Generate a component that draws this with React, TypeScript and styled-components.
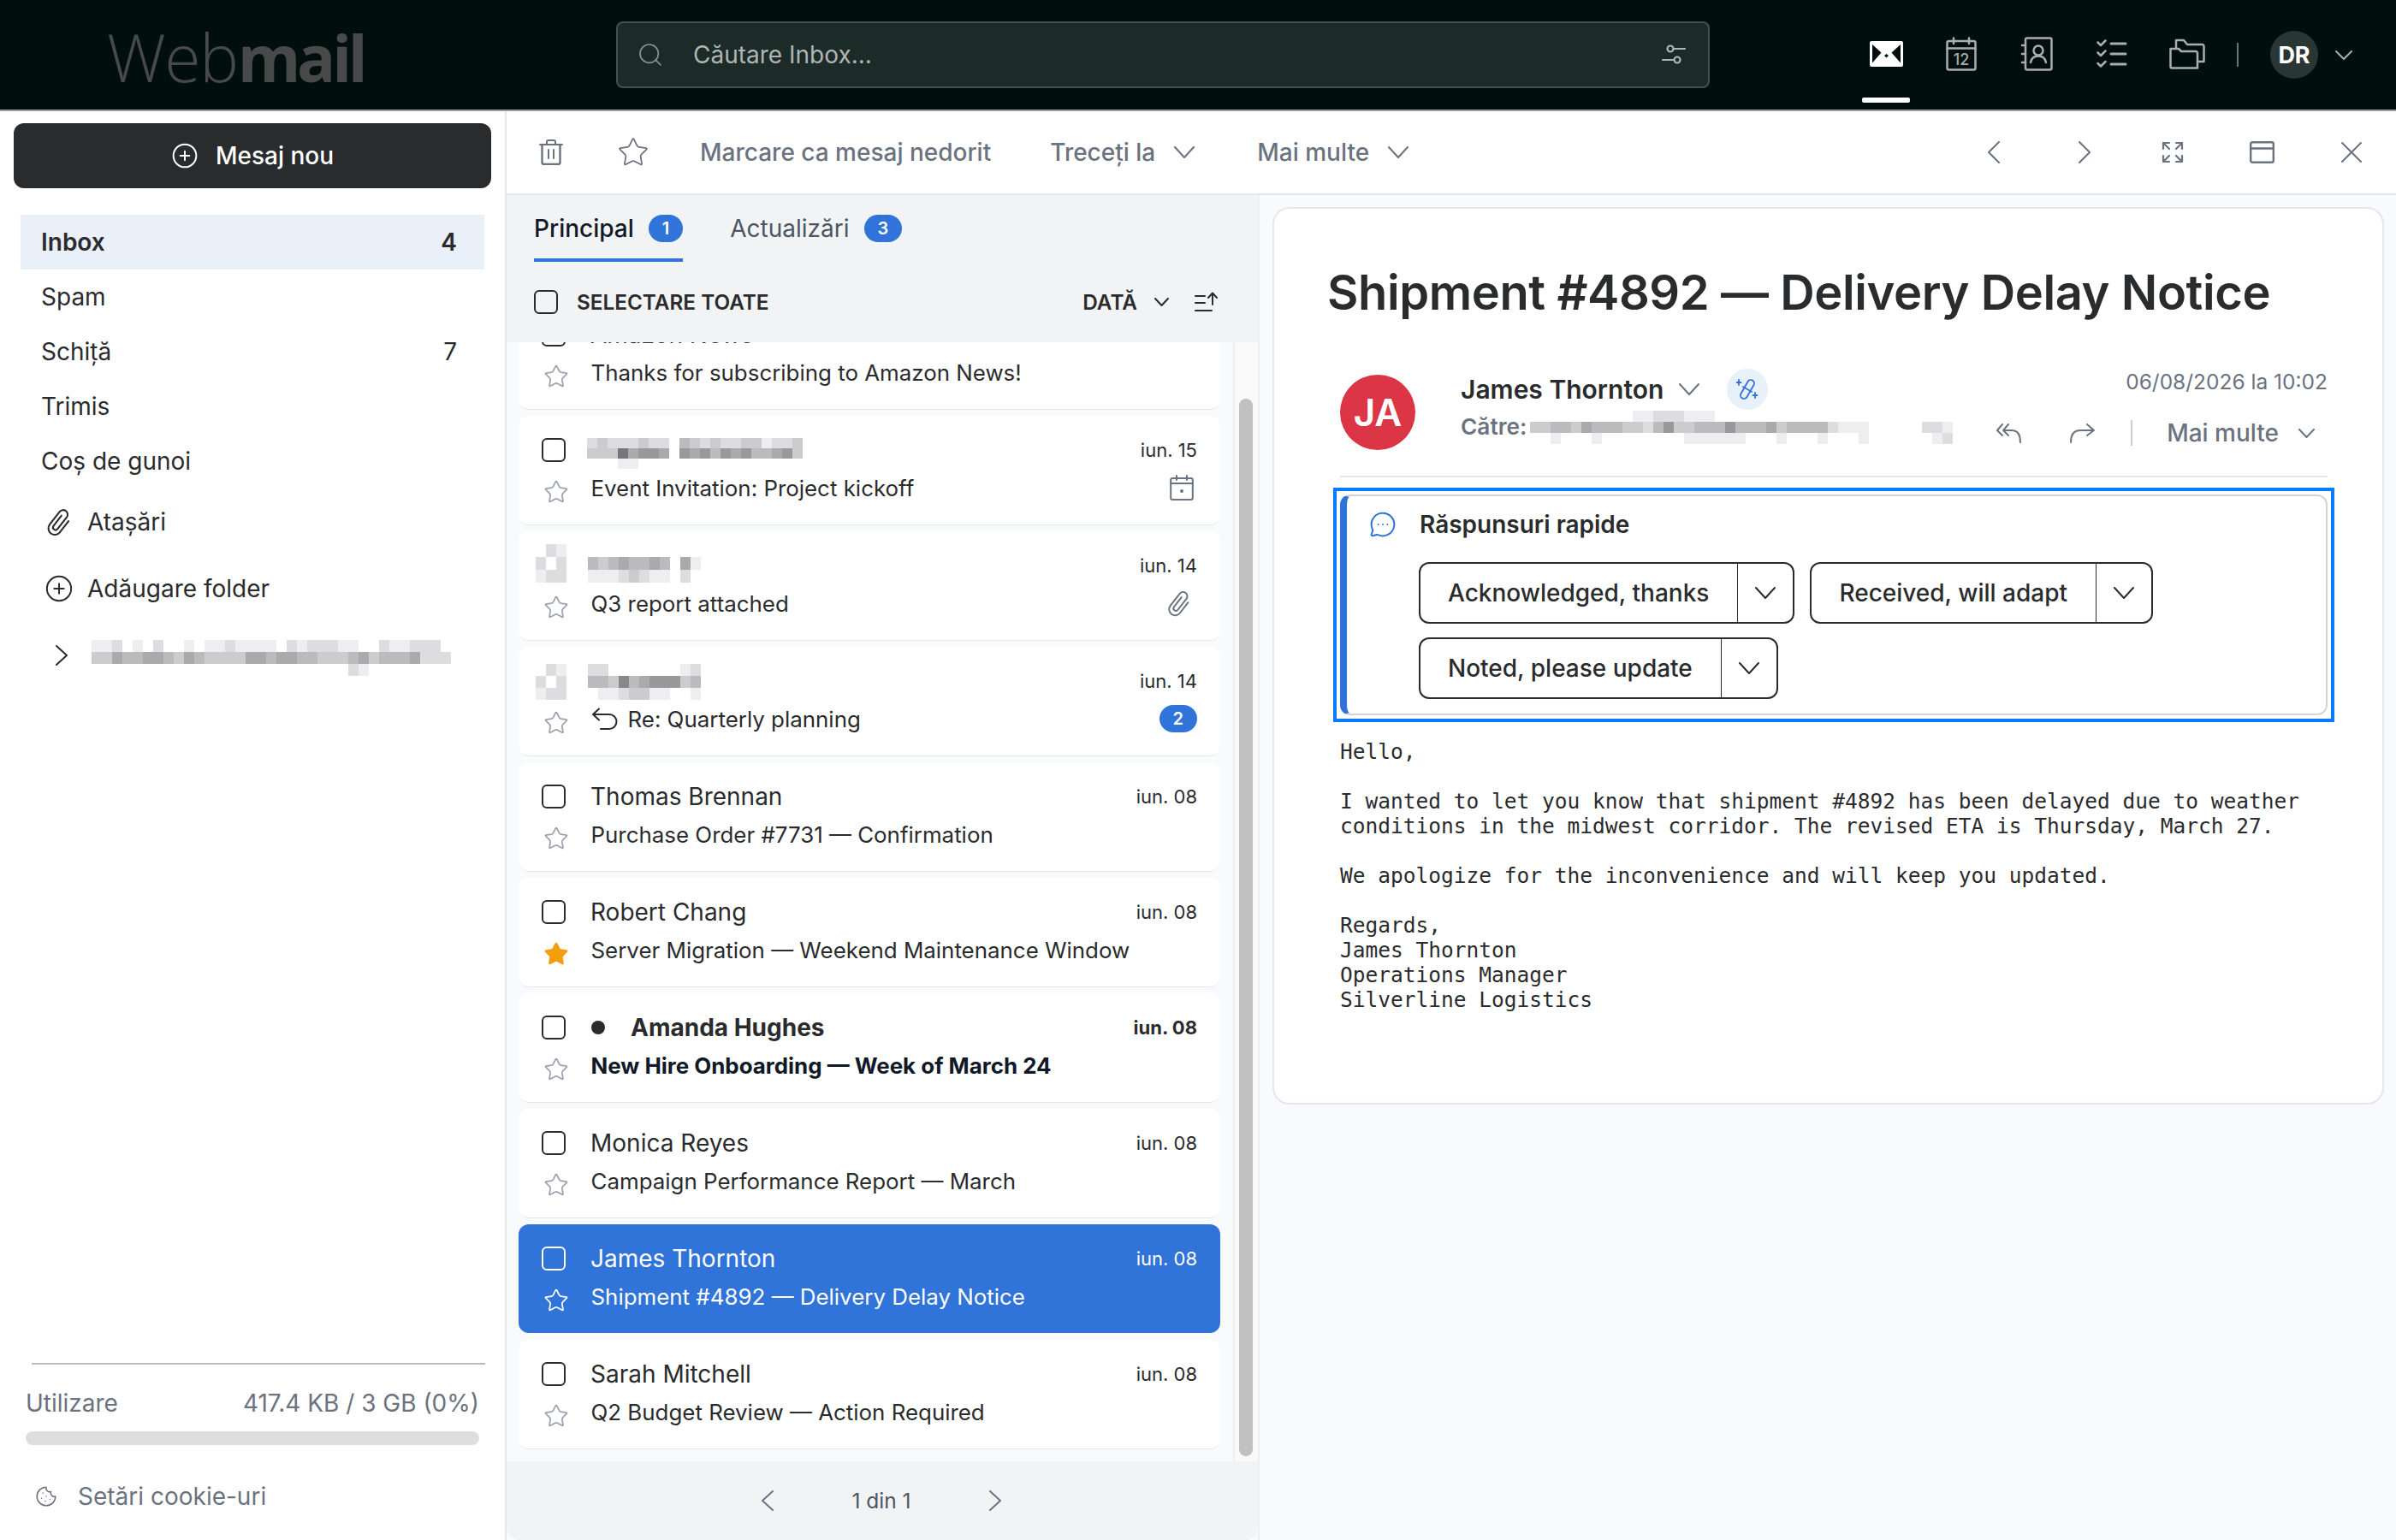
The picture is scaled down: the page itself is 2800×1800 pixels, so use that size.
import React from "react";
import styled, { createGlobalStyle } from "styled-components";
import { Star, CirclePlus, Cookie, MessageCircleMore, Search } from "lucide-react";

const Global = createGlobalStyle`
  html, body { margin: 0; padding: 0; height: 100%; overflow: hidden; }
  body { font-family: Inter, "Noto Sans", sans-serif; color: #2a2b2d; background: #fff; }
  * { box-sizing: border-box; }
  svg { display: block; flex-shrink: 0; }
`;

const BLUE = "#3073d9";
const GREY = "#6b7280";

const Page = styled.div`
  width: 2800px;
  height: 1800px;
  display: flex;
  flex-direction: column;
`;

/* ---------- top bar ---------- */
const TopBar = styled.header`
  height: 130px;
  background: #000f0d;
  border-bottom: 2px solid #999c9b;
  display: flex;
  align-items: center;
  flex-shrink: 0;
`;
const Logo = styled.div`
  width: 720px;
  padding-left: 125px;
  margin-top: 4px;
  font-family: "Open Sans", sans-serif;
  font-size: 77px;
  letter-spacing: -1.4px;
  line-height: 1;
  font-weight: 300;
  color: #474a49;
  b { font-weight: 700; font-size: 75px; letter-spacing: -4.2px; }
`;
const SearchBox = styled.div`
  width: 1278px;
  height: 78px;
  background: #1c2a28;
  border: 2px solid #42504e;
  border-radius: 8px;
  display: flex;
  align-items: center;
  padding: 0 26px 0 22px;
  font-size: 28px;
  color: #b0b5b4;
  gap: 34px;
  span { flex: 1; }
`;
const NavIcons = styled.nav`
  margin-left: 162px;
  display: flex;
  align-items: center;
  height: 128px;
  flex: 1;
`;
const NavItem = styled.div<{ $active?: boolean }>`
  position: relative;
  width: 88px;
  height: 100%;
  display: flex;
  align-items: center;
  justify-content: center;
  padding-bottom: 2px;
  &::after {
    content: "";
    display: ${(p) => (p.$active ? "block" : "none")};
    position: absolute;
    left: 16px;
    right: 16px;
    bottom: 8px;
    height: 6px;
    border-radius: 2px;
    background: #fff;
  }
`;
const NavDivider = styled.div`
  width: 2px;
  height: 28px;
  background: #6f7574;
  margin: 0 37px 0 14px;
`;
const UserAvatar = styled.div`
  width: 56px;
  height: 56px;
  border-radius: 50%;
  background: #2a3634;
  color: #fff;
  font-weight: 700;
  font-size: 27px;
  display: flex;
  align-items: center;
  justify-content: center;
  margin-right: 20px;
`;

/* ---------- layout ---------- */
const Body = styled.div`
  flex: 1;
  display: flex;
  min-height: 0;
`;

/* ---------- sidebar ---------- */
const Sidebar = styled.aside`
  width: 592px;
  flex-shrink: 0;
  border-right: 2px solid #e5e7eb;
  display: flex;
  flex-direction: column;
  font-size: 28px;
`;
const Compose = styled.div`
  margin: 14px 16px 31px;
  height: 76px;
  border-radius: 12px;
  background: #2a2b2d;
  color: #fff;
  font-weight: 500;
  display: flex;
  align-items: center;
  justify-content: center;
  gap: 20px;
`;
const Folder = styled.div<{ $active?: boolean }>`
  margin: 0 24px;
  height: 64px;
  padding: 0 32px 0 24px;
  display: flex;
  align-items: center;
  justify-content: space-between;
  background: ${(p) => (p.$active ? "#e9f0fa" : "transparent")};
  font-weight: ${(p) => (p.$active ? 600 : 400)};
`;
const AuxRow = styled.div`
  height: 78px;
  padding-left: 54px;
  display: flex;
  align-items: center;
  gap: 18px;
`;
const AuxIcon = styled.div<{ $shift?: number }>`
  width: 30px;
  display: flex;
  justify-content: center;
  padding-left: ${(p) => p.$shift || 0}px;
`;
const Usage = styled.div`
  margin-top: auto;
  padding: 0 30px 0 30px;
  color: ${GREY};
  font-size: 28px;
`;
const UsageRule = styled.div`
  height: 2px;
  margin: 0 -7px 0 7px;
  background: #b9bdbc;
`;
const UsageText = styled.div`
  display: flex;
  justify-content: space-between;
  height: 78px;
  align-items: center;
  padding-top: 11px;
`;
const UsageBar = styled.div`
  height: 16px;
  border-radius: 8px;
  background: #dedede;
`;
const CookieRow = styled.div`
  height: 111px;
  padding: 8px 0 0 41px;
  display: flex;
  align-items: center;
  gap: 24px;
  color: ${GREY};
  font-size: 28px;
`;

/* ---------- toolbar ---------- */
const Main = styled.main`
  flex: 1;
  display: flex;
  flex-direction: column;
  min-width: 0;
`;
const Toolbar = styled.div`
  height: 98px;
  flex-shrink: 0;
  border-bottom: 2px solid #e5e7eb;
  display: flex;
  align-items: center;
  padding: 0 40px 0 38px;
  color: ${GREY};
  font-size: 28px;
  font-weight: 500;
`;
const ToolItem = styled.div<{ $gap: number }>`
  display: flex;
  align-items: center;
  gap: 22px;
  margin-left: ${(p) => p.$gap}px;
`;
const ToolRight = styled.div`
  margin-left: auto;
  display: flex;
  align-items: center;
`;

const Columns = styled.div`
  flex: 1;
  display: flex;
  min-height: 0;
`;

/* ---------- message list ---------- */
const ListColumn = styled.section`
  width: 880px;
  flex-shrink: 0;
  display: flex;
  flex-direction: column;
  border-right: 2px solid #eceef1;
  background: #f9fafc;
`;
const Tabs = styled.div`
  height: 78px;
  background: #f2f3f5;
  display: flex;
  padding-left: 32px;
  gap: 55px;
  flex-shrink: 0;
`;
const Tab = styled.div<{ $active?: boolean }>`
  height: 78px;
  display: flex;
  align-items: center;
  gap: 17px;
  padding-top: 4px;
  font-size: 28px;
  color: ${(p) => (p.$active ? "#111827" : "#4b5563")};
  font-weight: ${(p) => (p.$active ? 500 : 400)};
  border-bottom: 4px solid ${(p) => (p.$active ? BLUE : "transparent")};
`;
const CountBadge = styled.span`
  min-width: 40px;
  padding: 0 16px;
  height: 32px;
  border-radius: 16px;
  background: ${BLUE};
  color: #fff;
  font-size: 20px;
  font-weight: 600;
  display: inline-flex;
  align-items: center;
  justify-content: center;
`;
const SelectBar = styled.div`
  height: 94px;
  background: #f2f3f5;
  display: flex;
  align-items: center;
  padding: 0 46px 0 32px;
  flex-shrink: 0;
  font-size: 24.3px;
  font-weight: 600;
  position: relative;
  z-index: 1;
`;
const SelectLabel = styled.span`
  margin-left: 22px;
  flex: 1;
`;
const ListBody = styled.div`
  flex: 1;
  min-height: 0;
  display: flex;
  overflow: hidden;
`;
const Rows = styled.div`
  flex: 1;
  padding: 0 15px 0 14px;
  margin-top: -49px;
  display: flex;
  flex-direction: column;
  gap: 8px;
`;
const RowCard = styled.article<{ $selected?: boolean }>`
  height: 127px;
  flex-shrink: 0;
  border-radius: 12px;
  background: ${(p) => (p.$selected ? BLUE : "#fff")};
  color: ${(p) => (p.$selected ? "#fff" : "#2a2b2d")};
  box-shadow: ${(p) => (p.$selected ? "none" : "0 2px 0 -1px #e3e6ec")};
  padding: 26px 27px 0 27px;
  font-size: 25.9px;
`;
const RowTop = styled.div`
  height: 28px;
  display: flex;
  align-items: center;
`;
const RowBottom = styled.div`
  margin-top: 13px;
  height: 34px;
  display: flex;
  align-items: center;
`;
const CheckBox = styled.span<{ $light?: boolean }>`
  width: 28px;
  height: 28px;
  flex-shrink: 0;
  border-radius: 6px;
  border: 2px solid ${(p) => (p.$light ? "#fff" : "#2a2b2d")};
`;
const Sender = styled.span<{ $bold?: boolean }>`
  margin-left: 29px;
  flex: 1;
  font-size: 28px;
  font-weight: ${(p) => (p.$bold ? 700 : 400)};
`;
const RowDate = styled.span<{ $bold?: boolean }>`
  font-size: 22px;
  font-weight: ${(p) => (p.$bold ? 700 : 400)};
`;
const UnreadDot = styled.span`
  width: 16px;
  height: 16px;
  border-radius: 50%;
  background: #2a2b2d;
  margin: 0 1px 0 30px;
`;
const StarCell = styled.div`
  width: 57.5px;
  padding: 10px 0 0 2px;
  flex-shrink: 0;
`;
const Subject = styled.span<{ $bold?: boolean }>`
  flex: 1;
  display: flex;
  align-items: center;
  gap: 12px;
  font-weight: ${(p) => (p.$bold ? 700 : 400)};
  color: ${(p) => (p.$bold ? "#111827" : "inherit")};
`;
const RowIcon = styled.span`
  margin-right: 4px;
`;
const Track = styled.div`
  width: 29px;
  flex-shrink: 0;
  border-left: 2px solid #eceef1;
  background: #fafafa;
  padding: 66px 6px 6px 5px;
`;
const Thumb = styled.div`
  height: 100%;
  border-radius: 8px;
  background: #c1c1c1;
`;
const Pager = styled.div`
  height: 92px;
  flex-shrink: 0;
  background: #f2f3f5;
  border-radius: 0 0 16px 16px;
  display: flex;
  align-items: center;
  justify-content: center;
  gap: 91px;
  padding-right: 2px;
  font-size: 24.5px;
  color: #4b5563;
`;

/* ---------- reading pane ---------- */
const ReadingPane = styled.section`
  flex: 1;
  min-width: 0;
  background: #f9fafc;
  padding: 14px 14px 0 15px;
`;
const ReadingCard = styled.div`
  height: 1049px;
  background: #fff;
  border: 2px solid #e5e7eb;
  border-radius: 20px;
  padding: 0 64px 0 77px;
`;
const Title = styled.h1`
  margin: 60px 0 0 -15px;
  font-size: 56px;
  line-height: 76px;
  font-weight: 600;
  letter-spacing: -0.4px;
  color: #2a2b2d;
`;
const Meta = styled.div`
  display: flex;
  margin-top: 51px;
  padding-bottom: 30px;
  border-bottom: 2px solid #e5e7eb;
`;
const AvatarCircle = styled.div`
  width: 88px;
  height: 88px;
  border-radius: 50%;
  background: #dc3545;
  color: #fff;
  font-size: 44px;
  font-weight: 600;
  display: flex;
  align-items: center;
  justify-content: center;
  margin: 7px 53px 0 0;
  flex-shrink: 0;
`;
const MetaCol = styled.div`
  flex: 1;
  min-width: 0;
`;
const MetaLine = styled.div`
  display: flex;
  align-items: center;
  height: 48px;
`;
const SenderName = styled.span`
  font-size: 30px;
  font-weight: 600;
  margin-right: 18px;
`;
const WandPill = styled.span`
  width: 48px;
  height: 48px;
  border-radius: 50%;
  background: #e8f0fb;
  display: flex;
  align-items: center;
  justify-content: center;
  margin-left: 32px;
`;
const MetaDate = styled.span`
  margin-left: auto;
  align-self: flex-start;
  font-size: 24.5px;
  color: ${GREY};
`;
const ToLine = styled.div`
  display: flex;
  align-items: flex-start;
  height: 46px;
  color: ${GREY};
  font-size: 26.25px;
  font-weight: 600;
`;
const ToLabel = styled.span`
  margin: 4px 4px 0 0;
`;
const ToActions = styled.div`
  margin-left: auto;
  display: flex;
  align-items: center;
  height: 40px;
  margin-top: 7px;
  padding-right: 15px;
  font-size: 28px;
  font-weight: 500;
`;
const ActionRule = styled.span`
  width: 2px;
  height: 30px;
  background: #c9ccd1;
  margin: 0 40px 0 42px;
`;
const FocusRing = styled.div`
  margin: 12px -8px 0 -8px;
  border: 4px solid #0a7bff;
  padding: 4px;
`;
const QuickCard = styled.div`
  border: 2px solid #d1d5db;
  border-left: 8px solid ${BLUE};
  border-radius: 12px;
  height: 258px;
  padding: 17px 30px 0 26px;
`;
const QuickTitle = styled.div`
  display: flex;
  align-items: center;
  gap: 27px;
  height: 32px;
  font-size: 28px;
  font-weight: 600;
`;
const QuickButtons = styled.div`
  display: flex;
  flex-wrap: wrap;
  gap: 16px 18px;
  margin: 28px 0 0 58px;
`;
const SplitButton = styled.div`
  height: 72px;
  border: 2px solid #2a2b2d;
  border-radius: 12px;
  display: flex;
  align-items: center;
  font-size: 28px;
`;
const SplitLabel = styled.span`
  padding: 0 33px 0 32px;
  height: 100%;
  display: flex;
  align-items: center;
  font-weight: 500;
  border-right: 1px solid #2a2b2d;
`;
const SplitArrow = styled.span`
  width: 64px;
  display: flex;
  justify-content: center;
`;
const MessageBody = styled.pre`
  margin: 20px 0 0 0;
  font-family: "DejaVu Sans Mono", monospace;
  font-size: 24.5px;
  line-height: 29px;
  color: #2a2b2d;
`;

/* ---------- drawings ---------- */
const S = { fill: "none", stroke: "currentColor", strokeLinecap: "round", strokeLinejoin: "round" } as const;

// thin wide chevrons, dir picks the way it points
function Chevron({ dir = "down", w = 24, h = 14, color = GREY, sw = 2 }: { dir?: "down" | "left" | "right"; w?: number; h?: number; color?: string; sw?: number }) {
  const d =
    dir === "down"
      ? `M1 1 L${w / 2} ${h - 1} L${w - 1} 1`
      : dir === "left"
      ? `M${w - 1} 1 L1 ${h / 2} L${w - 1} ${h - 1}`
      : `M1 1 L${w - 1} ${h / 2} L1 ${h - 1}`;
  return (
    <svg width={w} height={h} viewBox={`0 0 ${w} ${h}`} style={{ color }}>
      <path d={d} {...S} strokeWidth={sw} />
    </svg>
  );
}

function MailIcon() {
  return (
    <svg width="39" height="30" viewBox="0 0 39 30">
      <rect width="39" height="30" rx="2" fill="#fff" />
      <path d="M3 4 L3 25.5 L13.5 13.5 Z M36 4 L36 25.5 L25.5 13.5 Z" fill="#000f0d" />
      <path d="M17 17 L19.5 15 L22 17 L19.5 19.5 Z" fill="#000f0d" />
    </svg>
  );
}
function CalendarNav() {
  return (
    <svg width="36" height="40" viewBox="0 0 36 40" style={{ color: "#a9aeac" }}>
      <rect x="1.5" y="5" width="33" height="33.5" rx="2" {...S} strokeWidth="2.5" />
      <path d="M1.5 13.5 H34.5 M9 1.5 V8 M27 1.5 V8" {...S} strokeWidth="2.5" />
      <text x="18" y="33" textAnchor="middle" fontFamily="Inter, sans-serif" fontSize="18" fontWeight="500" fill="currentColor">12</text>
    </svg>
  );
}
function ContactsNav() {
  return (
    <svg width="38" height="40" viewBox="0 0 38 40" style={{ color: "#a9aeac" }}>
      <rect x="6" y="1.5" width="30.5" height="37" rx="2" {...S} strokeWidth="2.5" />
      <path d="M2 10 H6 M2 20 H6 M2 30 H6" {...S} strokeWidth="2.5" />
      <circle cx="21" cy="16" r="5.5" {...S} strokeWidth="2.5" />
      <path d="M12 30 C13 24.5 17 22.5 21 22.5 C25 22.5 29 24.5 30 30" {...S} strokeWidth="2.5" />
    </svg>
  );
}
function TasksNav() {
  return (
    <svg width="36" height="34" viewBox="0 0 36 34" style={{ color: "#a9aeac" }}>
      <path d="M1.5 3.5 L5 7 L10.5 1.5 M1.5 15.5 L5 19 L10.5 13.5 M1.5 28 L5 31.5 L10.5 26" {...S} strokeWidth="2.5" />
      <path d="M17 5 H34 M17 17 H34 M17 29 H34" {...S} strokeWidth="3" />
    </svg>
  );
}
function FolderNav() {
  return (
    <svg width="42" height="36" viewBox="0 0 42 36" style={{ color: "#a9aeac" }}>
      <path d="M1.5 12 H11 L14 15 H31 C32 15 33 16 33 17 V34.5 H3 C2 34.5 1.5 34 1.5 33 Z" {...S} strokeWidth="2.5" />
      <path d="M8 11 V2 H17 L21 7 H38.5 C39.5 7 40.5 8 40.5 9 V27 H33" {...S} strokeWidth="2.5" />
    </svg>
  );
}
function SlidersIcon() {
  return (
    <svg width="28" height="24" viewBox="0 0 28 24" style={{ color: "#b0b5b4" }}>
      <path d="M14 5 H27 M1 18 H13" {...S} strokeWidth="2.2" />
      <circle cx="10" cy="5" r="3.5" {...S} strokeWidth="2.2" />
      <circle cx="18" cy="18" r="3.5" {...S} strokeWidth="2.2" />
    </svg>
  );
}
function TrashIcon() {
  return (
    <svg width="28" height="30" viewBox="0 0 28 30" style={{ color: GREY }}>
      <path d="M1 6 H27 M9 5 V2.5 C9 1.5 10 1 11 1 H17 C18 1 19 1.5 19 2.5 V5" {...S} strokeWidth="2" />
      <path d="M3.5 6 V27 C3.5 28.5 4.2 29 5.5 29 H22.5 C23.8 29 24.5 28.5 24.5 27 V6" {...S} strokeWidth="2.4" />
      <path d="M11 12 V22 M17 12 V22" {...S} strokeWidth="2" />
    </svg>
  );
}
function ExpandIcon() {
  return (
    <svg width="26" height="26" viewBox="0 0 26 26" style={{ color: GREY }}>
      <path d="M2 9 V2 H9 M2 2 L9 9 M17 2 H24 V9 M24 2 L17 9 M2 17 V24 H9 M2 24 L9 17 M17 24 H24 V17 M24 24 L17 17" {...S} strokeWidth="2.2" />
    </svg>
  );
}
function PaneIcon() {
  return (
    <svg width="29" height="26" viewBox="0 0 29 26" style={{ color: GREY }}>
      <rect x="1.2" y="1.2" width="26.6" height="23.6" rx="2" {...S} strokeWidth="2.4" />
      <path d="M1.2 8.5 H27.8" {...S} strokeWidth="2.4" />
    </svg>
  );
}
function CloseIcon() {
  return (
    <svg width="24" height="24" viewBox="0 0 24 24" style={{ color: GREY }}>
      <path d="M1 1 L23 23 M23 1 L1 23" {...S} strokeWidth="2" />
    </svg>
  );
}
function SortIcon() {
  return (
    <svg width="28" height="24" viewBox="0 0 28 24" style={{ color: "#2a2b2d" }}>
      <path d="M1 5 H12 M1 13 H12 M1 22 H20 M21 15 V2 M16 7 L21 1.5 L26 7" {...S} strokeWidth="2" />
    </svg>
  );
}
function ClipIcon({ size = 28, color = "#2a2b2d" }: { size?: number; color?: string }) {
  return (
    <svg width={size} height={size} viewBox="0 0 24 24" style={{ color }}>
      <g transform="rotate(38 12 12)">
        <path d="M10.5 7 V17 A2 2 0 0 0 14.5 17 V5.5 A3.5 3.5 0 0 0 7.5 5.5 V18 A5 5 0 0 0 17.5 18 V7" {...S} strokeWidth="1.4" />
      </g>
    </svg>
  );
}
function SmallCalendar() {
  return (
    <svg width="28" height="30" viewBox="0 0 28 30" style={{ color: GREY }}>
      <rect x="1.2" y="4" width="25.6" height="25" rx="2" {...S} strokeWidth="2" />
      <path d="M1.2 10 H26.8 M8 1 V6 M20 1 V6" {...S} strokeWidth="2" />
      <circle cx="14" cy="19" r="2" fill="currentColor" />
    </svg>
  );
}
function WandIcon() {
  return (
    <svg width="26" height="28" viewBox="0 0 26 28" style={{ color: BLUE }}>
      <rect x="9" y="2" width="8" height="24" rx="4" transform="rotate(30 13 14)" {...S} strokeWidth="1.8" />
      <path d="M7 14 L19 14" {...S} strokeWidth="1.6" transform="rotate(30 13 14)" />
      <path d="M3 3 V9 M0.5 6 H5.5 M22 18 V24 M19.5 21 H24.5" {...S} strokeWidth="1.8" />
    </svg>
  );
}
function ReplyAllIcon() {
  return (
    <svg width="30" height="24" viewBox="0 0 30 24" style={{ color: GREY }}>
      <path d="M7 2 L1 9 L7 15 M14 2 L8 9 L14 15 M8 9 H18 C24 9 28 13 28 23" {...S} strokeWidth="2" />
    </svg>
  );
}
function ForwardIcon() {
  return (
    <svg width="30" height="24" viewBox="0 0 30 24" style={{ color: GREY }}>
      <path d="M21 2 L29 9 L21 15 M29 9 H13 C6 9 2 13 2 23" {...S} strokeWidth="2" />
    </svg>
  );
}
function RepliedIcon() {
  return (
    <svg width="31" height="27" viewBox="0 0 31 27" style={{ color: "#2a2b2d" }}>
      <path d="M9 1.5 L2 8 L9 14.5 M2 8 H21 A8.5 8.5 0 0 1 21 25 H11" {...S} strokeWidth="2" />
    </svg>
  );
}

// the redacted bits of the shot: one hex digit per cell, "." leaves it empty
function Mosaic({ lines, cw = 12, ch = 12 }: { lines: string[]; cw?: number; ch?: number }) {
  const cols = Math.max(...lines.map((l) => l.length));
  return (
    <svg width={cols * cw} height={lines.length * ch} shapeRendering="crispEdges">
      {lines.map((line, y) =>
        line.split("").map((c, x) => {
          if (c === ".") return null;
          const v = parseInt(c, 16) * 17;
          return <rect key={x + "-" + y} x={x * cw} y={y * ch} width={cw} height={ch} fill={`rgb(${v},${v},${v + 2})`} />;
        })
      )}
    </svg>
  );
}

const RowMosaicWrap = styled.span<{ $top: number }>`
  margin: ${(p) => p.$top}px 0 0 25px;
  flex: 1;
  display: flex;
  align-self: flex-start;
`;
const CheckMosaicWrap = styled.span<{ $top: number }>`
  margin: ${(p) => p.$top}px 0 0 -7px;
  flex-shrink: 0;
  align-self: flex-start;
`;
const FolderMosaicWrap = styled.span`
  margin: 5px 0 0 5px;
`;
const ToMosaicWrap = styled.span`
  display: flex;
  gap: 62px;
  margin-top: 1px;
`;

type Row = {
  from?: string;
  subject: string;
  date: string;
  starred?: boolean;
  unread?: boolean;
  selected?: boolean;
  extra?: "calendar" | "clip" | "badge";
  replied?: boolean;
  fromMosaic?: string[];
  cellH?: number;
  mosaicTop?: number;
  checkMosaic?: boolean;
};

const checkCells = ["fde", "d.d", "edd"];

const rows: Row[] = [
  { from: "Amazon News", subject: "Thanks for subscribing to Amazon News!", date: "" },
  {
    subject: "Event Invitation: Project kickoff",
    date: "iun. 15",
    extra: "calendar",
    mosaicTop: 0,
    fromMosaic: ["dcdddcdd.bcdcddcceddc", "ccc7a99a.9a9b9a9bba9c", "...ee................"],
  },
  {
    subject: "Q3 report attached",
    date: "iun. 14",
    extra: "clip",
    checkMosaic: true,
    cellH: 15,
    mosaicTop: -11,
    fromMosaic: ["f.......f.f", "bcbabbab.ae", "eeedcdee.df"],
  },
  {
    subject: "Re: Quarterly planning",
    date: "iun. 14",
    extra: "badge",
    replied: true,
    checkMosaic: true,
    cellH: 14,
    mosaicTop: -6,
    fromMosaic: ["dd......fed", "bbc8ba999cb", "feedcceeffe"],
  },
  { from: "Thomas Brennan", subject: "Purchase Order #7731 — Confirmation", date: "iun. 08" },
  { from: "Robert Chang", subject: "Server Migration — Weekend Maintenance Window", date: "iun. 08", starred: true },
  { from: "Amanda Hughes", subject: "New Hire Onboarding — Week of March 24", date: "iun. 08", unread: true },
  { from: "Monica Reyes", subject: "Campaign Performance Report — March", date: "iun. 08" },
  { from: "James Thornton", subject: "Shipment #4892 — Delivery Delay Notice", date: "iun. 08", selected: true },
  { from: "Sarah Mitchell", subject: "Q2 Budget Review — Action Required", date: "iun. 08" },
];

function MessageRow({ row }: { row: Row }) {
  const light = row.selected;
  return (
    <RowCard $selected={row.selected}>
      <RowTop>
        {row.checkMosaic ? (
          <CheckMosaicWrap $top={row.mosaicTop || 0}>
            <Mosaic lines={checkCells} cw={12} ch={row.cellH} />
          </CheckMosaicWrap>
        ) : (
          <CheckBox $light={light} />
        )}
        {row.unread && <UnreadDot />}
        {row.fromMosaic ? (
          <RowMosaicWrap $top={row.mosaicTop || 0}>
            <Mosaic lines={row.fromMosaic} ch={row.cellH} />
          </RowMosaicWrap>
        ) : (
          <Sender $bold={row.unread}>{row.from}</Sender>
        )}
        <RowDate $bold={row.unread}>{row.date}</RowDate>
      </RowTop>
      <RowBottom>
        <StarCell>
          <Star
            size={30}
            strokeWidth={1.4}
            color={row.starred ? "#f59e0b" : light ? "#fff" : "#9ca3af"}
            fill={row.starred ? "#f59e0b" : "none"}
          />
        </StarCell>
        <Subject $bold={row.unread}>
          {row.replied && <RepliedIcon />}
          {row.subject}
        </Subject>
        {row.extra === "calendar" && (
          <RowIcon>
            <SmallCalendar />
          </RowIcon>
        )}
        {row.extra === "clip" && (
          <RowIcon>
            <ClipIcon size={34} color={GREY} />
          </RowIcon>
        )}
        {row.extra === "badge" && <CountBadge>2</CountBadge>}
      </RowBottom>
    </RowCard>
  );
}

const bodyText = `Hello,

I wanted to let you know that shipment #4892 has been delayed due to weather
conditions in the midwest corridor. The revised ETA is Thursday, March 27.

We apologize for the inconvenience and will keep you updated.

Regards,
James Thornton
Operations Manager
Silverline Logistics`;

export default function App() {
  return (
    <Page>
      <Global />
      <TopBar>
        <Logo>
          Web<b>mail</b>
        </Logo>
        <SearchBox>
          <Search size={32} strokeWidth={1.3} color="#8a908f" />
          <span>Căutare Inbox...</span>
          <SlidersIcon />
        </SearchBox>
        <NavIcons>
          <NavItem $active>
            <MailIcon />
          </NavItem>
          <NavItem>
            <CalendarNav />
          </NavItem>
          <NavItem>
            <ContactsNav />
          </NavItem>
          <NavItem>
            <TasksNav />
          </NavItem>
          <NavItem>
            <FolderNav />
          </NavItem>
          <NavDivider />
          <UserAvatar>DR</UserAvatar>
          <Chevron w={20} h={11} color="#a9aeac" />
        </NavIcons>
      </TopBar>
      <Body>
        <Sidebar>
          <Compose>
            <CirclePlus size={32} strokeWidth={1.5} />
            Mesaj nou
          </Compose>
          <Folder $active>
            Inbox <span>4</span>
          </Folder>
          <Folder>Spam</Folder>
          <Folder>
            Schiță <span>7</span>
          </Folder>
          <Folder>Trimis</Folder>
          <Folder>Coș de gunoi</Folder>
          <AuxRow>
            <AuxIcon>
              <ClipIcon size={36} />
            </AuxIcon>
            Atașări
          </AuxRow>
          <AuxRow>
            <AuxIcon>
              <CirclePlus size={34} strokeWidth={1.4} />
            </AuxIcon>
            Adăugare folder
          </AuxRow>
          <AuxRow>
            <AuxIcon $shift={6}>
              <Chevron dir="right" w={14} h={24} color="#2a2b2d" />
            </AuxIcon>
            <FolderMosaicWrap>
              <Mosaic
                cw={12}
                ch={14}
                lines={[
                  "eedfefdffefeedeeeefdedddeeffdeeddd.",
                  "ccabbaabcabccccaabaabbcccbacbbbaddd",
                  ".........................de........",
                ]}
              />
            </FolderMosaicWrap>
          </AuxRow>
          <Usage>
            <UsageRule />
            <UsageText>
              <span>Utilizare</span>
              <span>417.4 KB / 3 GB (0%)</span>
            </UsageText>
            <UsageBar />
          </Usage>
          <CookieRow>
            <Cookie size={26} strokeWidth={1.4} />
            Setări cookie-uri
          </CookieRow>
        </Sidebar>
        <Main>
          <Toolbar>
            <ToolItem $gap={0}>
              <TrashIcon />
            </ToolItem>
            <ToolItem $gap={63}>
              <Star size={38} strokeWidth={1.1} color={GREY} />
            </ToolItem>
            <ToolItem $gap={59}>Marcare ca mesaj nedorit</ToolItem>
            <ToolItem $gap={69}>
              Treceți la <Chevron />
            </ToolItem>
            <ToolItem $gap={73}>
              Mai multe <Chevron />
            </ToolItem>
            <ToolRight>
              <Chevron dir="left" w={14} h={26} />
              <ToolItem $gap={92}>
                <Chevron dir="right" w={14} h={26} />
              </ToolItem>
              <ToolItem $gap={83}>
                <ExpandIcon />
              </ToolItem>
              <ToolItem $gap={77}>
                <PaneIcon />
              </ToolItem>
              <ToolItem $gap={78}>
                <CloseIcon />
              </ToolItem>
            </ToolRight>
          </Toolbar>
          <Columns>
            <ListColumn>
              <Tabs>
                <Tab $active>
                  Principal <CountBadge>1</CountBadge>
                </Tab>
                <Tab>
                  Actualizări <CountBadge>3</CountBadge>
                </Tab>
              </Tabs>
              <SelectBar>
                <CheckBox />
                <SelectLabel>SELECTARE TOATE</SelectLabel>
                DATĂ
                <ToolItem $gap={20}>
                  <Chevron w={17} h={10} color="#2a2b2d" />
                </ToolItem>
                <ToolItem $gap={30}>
                  <SortIcon />
                </ToolItem>
              </SelectBar>
              <ListBody>
                <Rows>
                  {rows.map((r, i) => (
                    <MessageRow key={i} row={r} />
                  ))}
                </Rows>
                <Track>
                  <Thumb />
                </Track>
              </ListBody>
              <Pager>
                <Chevron dir="left" w={14} h={24} />
                1 din 1
                <Chevron dir="right" w={14} h={24} />
              </Pager>
            </ListColumn>
            <ReadingPane>
              <ReadingCard>
                <Title>Shipment #4892 — Delivery Delay Notice</Title>
                <Meta>
                  <AvatarCircle>JA</AvatarCircle>
                  <MetaCol>
                    <MetaLine>
                      <SenderName>James Thornton</SenderName>
                      <Chevron />
                      <WandPill>
                        <WandIcon />
                      </WandPill>
                      <MetaDate>06/08/2026 la 10:02</MetaDate>
                    </MetaLine>
                    <ToLine>
                      <ToLabel>Către:</ToLabel>
                      <ToMosaicWrap>
                        <Mosaic
                          ch={13}
                          lines={[
                            ".f..f.....eedddeeef..f......f....",
                            "ccbbcabbbccdb9ccbbb9bbbacbbbbdeee",
                            "ffefffeffffffffeeeeeefffefffefffe",
                          ]}
                        />
                        <Mosaic ch={13} lines={["...", "dde", "fed"]} cw={12} />
                      </ToMosaicWrap>
                      <ToActions>
                        <ReplyAllIcon />
                        <ToolItem $gap={55}>
                          <ForwardIcon />
                        </ToolItem>
                        <ActionRule />
                        Mai multe
                        <ToolItem $gap={23}>
                          <Chevron w={19} h={11} />
                        </ToolItem>
                      </ToActions>
                    </ToLine>
                  </MetaCol>
                </Meta>
                <FocusRing>
                  <QuickCard>
                    <QuickTitle>
                      <MessageCircleMore size={32} strokeWidth={1.5} color={BLUE} />
                      Răspunsuri rapide
                    </QuickTitle>
                    <QuickButtons>
                      <SplitButton>
                        <SplitLabel>Acknowledged, thanks</SplitLabel>
                        <SplitArrow>
                          <Chevron color="#2a2b2d" />
                        </SplitArrow>
                      </SplitButton>
                      <SplitButton>
                        <SplitLabel>Received, will adapt</SplitLabel>
                        <SplitArrow>
                          <Chevron color="#2a2b2d" />
                        </SplitArrow>
                      </SplitButton>
                      <SplitButton>
                        <SplitLabel>Noted, please update</SplitLabel>
                        <SplitArrow>
                          <Chevron color="#2a2b2d" />
                        </SplitArrow>
                      </SplitButton>
                    </QuickButtons>
                  </QuickCard>
                </FocusRing>
                <MessageBody>{bodyText}</MessageBody>
              </ReadingCard>
            </ReadingPane>
          </Columns>
        </Main>
      </Body>
    </Page>
  );
}
